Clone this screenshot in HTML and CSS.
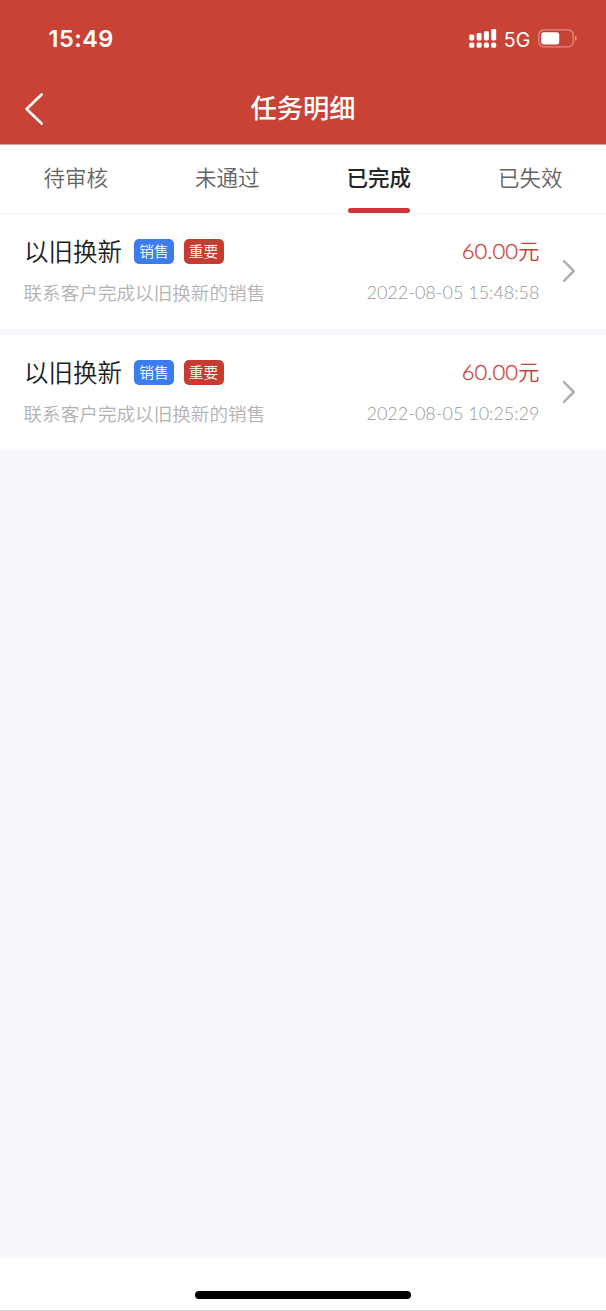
FILE: index.html
```
<!DOCTYPE html>
<html lang="zh-CN">
<head>
<meta charset="utf-8">
<title>任务明细</title>
<link rel="stylesheet" href="styles.css">
</head>
<body>
<div class="app">
  <header class="header">
    <div class="status">
      <span class="time">15:49</span>
      <div class="indicators">
        <svg class="signal" width="28" height="20" viewBox="0 0 28 20" fill="#fff">
          <rect x="0.3" y="5.4" width="5" height="6" rx="1.4"/><rect x="7.6" y="4" width="5" height="7.4" rx="1.4"/><rect x="14.9" y="2.3" width="5" height="9.1" rx="1.4"/><rect x="22.2" y="0" width="5" height="11.4" rx="1.4"/>
          <rect x="0.3" y="13.6" width="5" height="5.2" rx="1.6"/><rect x="7.6" y="13.6" width="5" height="5.2" rx="1.6"/><rect x="14.9" y="13.6" width="5" height="5.2" rx="1.6"/><rect x="22.2" y="13.6" width="5" height="5.2" rx="1.6"/>
        </svg>
        <span class="network">5G</span>
        <svg class="battery" width="40" height="20" viewBox="0 0 40 20">
          <rect x="0.8" y="0.8" width="34.4" height="17" rx="5" fill="none" stroke="#fff" stroke-opacity=".4" stroke-width="1.3"/>
          <rect x="3.2" y="3.2" width="18" height="12.2" rx="2.6" fill="#fff"/>
          <path d="M37 6.8c2.2.8 2.2 4.2 0 5z" fill="#fff" fill-opacity=".5"/>
        </svg>
      </div>
    </div>
    <nav class="navbar">
      <svg class="back" width="20" height="32" viewBox="0 0 20 32" fill="none" stroke="#fff" stroke-width="2.6" stroke-linecap="round" stroke-linejoin="round"><path d="M17.6 1.5 2.6 16l15 14.5"/></svg>
      <h1 class="title">任务明细</h1>
    </nav>
  </header>
  <div class="tabs">
    <div class="tab">待审核</div>
    <div class="tab">未通过</div>
    <div class="tab active">已完成</div>
    <div class="tab">已失效</div>
  </div>
  <main class="list">
    <article class="card">
      <div class="info">
        <div class="heading"><h2 class="name">以旧换新</h2><span class="tag blue">销售</span><span class="tag red">重要</span></div>
        <p class="desc">联系客户完成以旧换新的销售</p>
      </div>
      <div class="meta"><div class="price">60.00<span class="unit">元</span></div><div class="date">2022-08-05 15:48:58</div></div>
      <svg class="arrow" width="14" height="24" viewBox="0 0 14 24" fill="none" stroke="#b0b0b0" stroke-width="2.5" stroke-linecap="round" stroke-linejoin="round"><path d="M2 2.2 11.8 12 2 21.8"/></svg>
    </article>
    <article class="card">
      <div class="info">
        <div class="heading"><h2 class="name">以旧换新</h2><span class="tag blue">销售</span><span class="tag red">重要</span></div>
        <p class="desc">联系客户完成以旧换新的销售</p>
      </div>
      <div class="meta"><div class="price">60.00<span class="unit">元</span></div><div class="date">2022-08-05 10:25:29</div></div>
      <svg class="arrow" width="14" height="24" viewBox="0 0 14 24" fill="none" stroke="#b0b0b0" stroke-width="2.5" stroke-linecap="round" stroke-linejoin="round"><path d="M2 2.2 11.8 12 2 21.8"/></svg>
    </article>
  </main>
  <footer class="footer"><div class="home"></div></footer>
</div>
</body>
</html>
```
FILE: styles.css
```
* { box-sizing: border-box; margin: 0; padding: 0; }
body { font-family: "Noto Sans CJK SC", sans-serif; background: #f6f8fc; }
.app { width: 606px; height: 1311px; display: flex; flex-direction: column; background: #f6f8fc; }
svg { display: block; flex: none; }
.header { height: 144px; flex: none; background: #c84235; color: #fff; }
.status { height: 76px; padding: 0 27.8px 0 48.5px; display: flex; align-items: center; justify-content: space-between; }
.time { font: 600 23.5px/28px Inter, sans-serif; letter-spacing: .5px; padding-top: 1px; }
.indicators { display: flex; align-items: center; }
.signal { margin-top: 2px; }
.network { font: 400 19.5px/24px Inter, sans-serif; margin: 3px 8.4px 0 7px; width: 26px; }
.battery { margin-top: 1px; }
.navbar { height: 64px; display: grid; grid-template-columns: 80px 1fr 80px; align-items: center; }
.back { margin-left: 24px; margin-top: 2px; }
.title { font-size: 26.3px; line-height: 36px; padding-bottom: 2px; font-weight: 500; text-align: center; }
.tabs { height: 70px; flex: none; background: #fff; display: grid; grid-template-columns: repeat(4, 1fr); border-top: 1px solid #dba39d; border-bottom: 1px solid #f3f3f5; }
.tab { display: flex; flex-direction: column; align-items: center; font-size: 21.5px; line-height: 32px; font-weight: 350; padding-top: 16px; color: #646464; }
.active { color: #252525; font-weight: 500; }
.active::after { content: ""; width: 62px; height: 5px; border-radius: 3px; background: #d2343b; margin-top: auto; }
.list { flex: 1; display: flex; flex-direction: column; gap: 5.5px; }
.card { height: 115.3px; background: #fff; padding: 20px 30.5px 0 24px; display: flex; }
.info { flex: 1; }
.heading { height: 34px; display: flex; align-items: center; }
.name { font-size: 24.5px; line-height: 34px; font-weight: 350; color: #1d1d1d; width: 110px; }
.tag { width: 40px; height: 25px; border-radius: 5px; color: #fff; font-size: 14.7px; line-height: 24px; font-weight: 350; text-align: center; margin-top: 1px; margin-right: 9.5px; }
.blue { background: #3c7ded; }
.red { background: #c63c31; }
.desc { font-size: 18.6px; line-height: 28px; font-weight: 350; color: #b3b3b3; margin-top: 10.2px; margin-left: -.5px; white-space: nowrap; }
.meta { text-align: right; width: 200px; }
.price { height: 34px; font-family: Lato, sans-serif; font-size: 22px; line-height: 32px; font-weight: 300; -webkit-text-stroke: .3px #cc4238; color: #cc4238; }
.unit { font-family: "Noto Sans CJK SC", sans-serif; font-size: 21.5px; font-weight: 350; -webkit-text-stroke: 0; }
.date { font-family: Lato, sans-serif; font-size: 18px; line-height: 28px; font-weight: 300; color: #999; margin-top: 10.2px; white-space: nowrap; }
.arrow { margin: 25px 0 0 22px; }
.footer { height: 53px; flex: none; background: #fff; border-bottom: 1px solid #cfcfcf; display: flex; justify-content: center; padding-top: 32.5px; }
.home { width: 216px; height: 8px; border-radius: 4px; background: #000; }
```
